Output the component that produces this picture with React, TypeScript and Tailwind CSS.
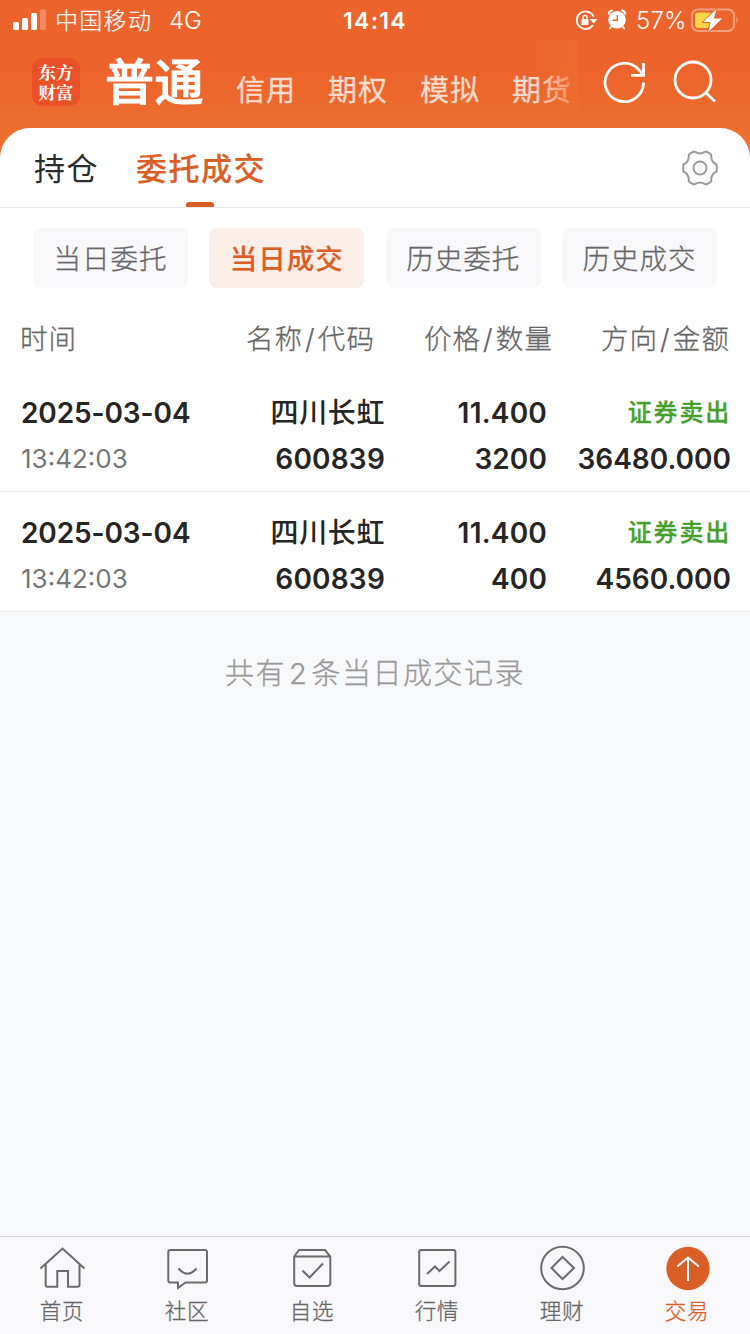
import React from "react"

type Trade = {
    id: number
    date: string
    time: string
    name: string
    code: string
    price: string
    amount: string
    side: string
    total: string
}

type NavItem = {
    label: string
    icon: React.ReactNode
    active?: boolean
}

const trades: Trade[] = [
    { id: 1, date: "2025-03-04", time: "13:42:03", name: "四川长虹", code: "600839", price: "11.400", amount: "3200", side: "证券卖出", total: "36480.000" },
    { id: 2, date: "2025-03-04", time: "13:42:03", name: "四川长虹", code: "600839", price: "11.400", amount: "400", side: "证券卖出", total: "4560.000" },
]

const filters = ["当日委托", "当日成交", "历史委托", "历史成交"]

const navItems: NavItem[] = [
    {
        label: "首页",
        icon: <path d="M2.5 23.5 24.5 3.5 46.5 23.5M7.7 19V40Q7.7 41.7 9.4 41.7H19.3V26H30V41.7H39.8Q41.5 41.7 41.5 40V19" />,
    },
    {
        label: "社区",
        icon: (
            <>
                <path d="M7.3 5H42Q44 5 44 7V35.5Q44 37.5 42 37.5H22.5L15 43V37.5H7.3Q5.3 37.5 5.3 35.5V7Q5.3 5 7.3 5Z" />
                <path d="M15.5 23.5Q24.5 34 33.5 23.5" />
            </>
        ),
    },
    {
        label: "自选",
        icon: (
            <>
                <path d="M6.2 11.5 11 5H37L42.3 11.5V38Q42.3 41 39.5 41H9Q6.2 41 6.2 38ZM6.2 11.5H42.3" />
                <path d="M14.5 25.5 21.5 32.5 35 18.5" />
            </>
        ),
    },
    {
        label: "行情",
        icon: (
            <>
                <rect x="6.2" y="5" width="36.2" height="36" rx="2" />
                <path d="M14 29 22 21.5 26.5 26 36.5 16.5" />
            </>
        ),
    },
    {
        label: "理财",
        icon: (
            <>
                <circle cx="24.5" cy="23" r="21.3" />
                <path d="M24.5 12 36 23 24.5 34 13.5 23Z" />
            </>
        ),
    },
    {
        label: "交易",
        active: true,
        icon: (
            <>
                <circle cx="25" cy="23.5" r="21.7" fill="#d95f27" stroke="none" />
                <path d="M25 36V13M14.3 21.5 25 12.5 35.8 21.5" stroke="#fff" />
            </>
        ),
    },
]

function StatusBar() {
    return (
        <div className="flex h-10 items-center text-white">
            <svg className="ml-3 h-6 w-9 shrink-0" viewBox="0 0 36 24" fill="#fff">
                <rect x="1" y="14" width="6" height="8" rx="1.5" />
                <rect x="10" y="10" width="6" height="12" rx="1.5" />
                <rect x="19" y="5" width="6" height="17" rx="1.5" />
                <rect x="28" y="1" width="6" height="21" rx="1.5" opacity=".25" />
            </svg>
            <span className="mt-0.5 ml-[7px] w-[114px] text-[23px] font-light tracking-[1.3px] [-webkit-text-stroke:0.2px]">中国移动</span>
            <span className="mt-0.5 w-[174px] text-[24px] font-light">4G</span>
            <span className="mt-0.5 w-[232px] text-[23px] font-semibold tracking-[1.3px]">14:14</span>
            <svg className="h-6 w-[22px] shrink-0" viewBox="0 0 22 24" fill="none" stroke="#fff" strokeWidth="1.8">
                <path d="M18 17A8.8 8.8 0 1 1 18.8 9" />
                <path d="M14.5 11H22.5L18.8 15.5Z" fill="#fff" stroke="none" />
                <rect x="6.5" y="11" width="7" height="6" rx=".8" fill="#fff" stroke="none" />
                <path d="M8 11.5V9.5a2 2 0 0 1 4 0V11.5" strokeWidth="1.3" />
            </svg>
            <svg className="-mt-0.5 ml-[9px] h-6 w-[22px] shrink-0" viewBox="0 0 22 24">
                <circle cx="11" cy="12.8" r="8.8" fill="#fff" />
                <path d="M2.8 6.7Q3.2 4 6 3.5M19.2 6.7Q18.8 4 16 3.5" fill="none" stroke="#fff" strokeWidth="2" strokeLinecap="round" />
                <path d="M5 20 3.8 21.5M17 20 18.2 21.5" stroke="#fff" strokeWidth="1.8" strokeLinecap="round" />
                <path d="M11.3 8V13.3H6.5" fill="none" stroke="#ec632b" strokeWidth="1.4" />
            </svg>
            <span className="mt-0.5 ml-[8px] w-[55px] text-[24px] font-light tracking-[0.2px]">57%</span>
            <svg className="h-7 w-12 shrink-0" viewBox="0 0 48 28">
                <rect x="1" y="3.5" width="42" height="21.5" rx="6" fill="none" stroke="#fff" strokeOpacity=".4" strokeWidth="2" />
                <path d="M45.5 11Q48 14 45.5 17.5Z" fill="#fff" opacity=".5" />
                <rect x="4" y="6.5" width="17" height="15.5" rx="3" fill="#f8d648" />
                <path d="M26.5 1.5 11 16.5H19L16.5 27.500 32 12H23.5Z" fill="#fff" stroke="#ec632b" strokeWidth="1" />
            </svg>
        </div>
    )
}

function TopBar() {
    return (
        <div className="flex h-[88px] text-white">
            <div className="mt-[18px] ml-8 flex h-12 w-12 items-center justify-center rounded-[10px] bg-[#eb5129] text-center font-['Noto_Serif_CJK_SC','Noto_Sans_CJK_SC',serif] text-[17.5px] leading-[20px] font-bold">
                东方<br />财富
            </div>
            <h1 className="mt-[8px] ml-[25px] w-[131px] text-[49px] leading-[70px] font-medium tracking-[0.5px] [-webkit-text-stroke:1px]">普通</h1>
            <div className="relative flex w-[342px] shrink-0 gap-[32px] overflow-hidden text-[29px] leading-[102px] tracking-[1px] whitespace-nowrap text-[#fcdccd] [-webkit-text-stroke:0.3px]">
                <span>信用</span>
                <span>期权</span>
                <span>模拟</span>
                <span>期货</span>
                <div className="absolute top-0 right-0 h-full w-[44px] bg-linear-to-r from-[#ee6d31]/0 to-[#ee6d31]/80" />
            </div>
            <svg className="mt-[20px] ml-[25px] h-11 w-11 shrink-0" viewBox="0 0 44 44" fill="none" stroke="#fff" strokeWidth="2.8">
                <path d="M40.500 22.5A19.2 19.2 0 1 1 35.5 9.5L40 14" />
                <path d="M40.5 3V15.3H28" />
            </svg>
            <svg className="mt-[20px] ml-[25px] h-11 w-11 shrink-0" viewBox="0 0 44 44" fill="none" stroke="#fff" strokeWidth="2.8">
                <circle cx="21" cy="20" r="18" />
                <path d="M33.5 32.5 43 41.5" />
            </svg>
        </div>
    )
}

function Tabs() {
    return (
        <div className="flex h-20 border-b border-[#ebebed] pr-8 pl-[34px] text-[31px] leading-[82px] tracking-[1.5px]">
            <span className="w-[102px] text-[#2b2b2b]">持仓</span>
            <div className="relative w-[132px] font-medium text-[#d95f27] [-webkit-text-stroke:0.2px]">
                委托成交
                <div className="absolute bottom-0 left-[50px] h-[5px] w-7 rounded-t-[3px] bg-[#d95f27]" />
            </div>
            <svg className="mt-[22px] ml-auto h-9 w-9" viewBox="0 0 36 36" fill="none" stroke="#999" strokeWidth="2">
                <path d="M12 1.5C14 2.5 15.5 3.5 18 3.5S22 2.5 24 1.5Q27 2.5 29.3 5C28.8 9 30.5 12.500 34.500 14.5Q35.3 18 34.5 21.5C30.5 23.500 28.8 27 29.3 31Q27 33.5 24 34.5C22 33.5 20.5 32.5 18 32.5S14 33.5 12 34.5Q9 33.500 6.700 31C7.200 27 5.500 23.500 1.500 21.5Q.7 18 1.5 14.5C5.5 12.5 7.2 9 6.7 5Q9 2.5 12 1.5Z" strokeLinejoin="round" />
                <circle cx="18" cy="18" r="6.5" />
            </svg>
        </div>
    )
}

function TradeRow({ trade }: { trade: Trade }) {
    return (
        <div className="grid h-[120px] grid-cols-[190px_174px_162px_184px] content-start border-b border-[#ebebed] bg-white pt-[17.5px] pl-[21px] text-right text-[28px] leading-[46px] font-semibold text-[#262626]">
            <span className="text-left tracking-[-0.1px]">{trade.date}</span>
            <span className="font-medium tracking-[0.6px]">{trade.name}</span>
            <span className="tracking-[0.2px]">{trade.price}</span>
            <span className="text-[24px] font-medium tracking-[1.8px] text-[#469f2c] [-webkit-text-stroke:0.3px]">{trade.side}</span>
            <span className="text-left text-[26px] font-normal text-[#777]">{trade.time}</span>
            <span className="tracking-[0.2px]">{trade.code}</span>
            <span className="tracking-[0.1px]">{trade.amount}</span>
            <span>{trade.total}</span>
        </div>
    )
}

function ColumnTitle({ first, second }: { first: string, second: string }) {
    return (
        <span>{first}<span className="mx-[2px]">/</span>{second}</span>
    )
}

function BottomNav() {
    return (
        <nav className="grid h-[98px] grid-cols-6 border-t border-[#d3d4d6] bg-[#f8f8fa]">
            {navItems.map((item) => (
                <div key={item.label} className={`flex flex-col items-center pt-2 text-[21.5px] leading-[36px] ${item.active ? "text-[#d95f27]" : "text-[#666]"}`}>
                    <svg className="h-[48px] w-[49px]" viewBox="0 0 49 48" fill="none" stroke="#6b6b6b" strokeWidth="2">
                        {item.icon}
                    </svg>
                    <span className="-ml-px font-light tracking-[0.8px] [-webkit-text-stroke:0.3px]">{item.label}</span>
                </div>
            ))}
        </nav>
    )
}

function App() {
    return (
        <div className="flex h-[1334px] w-[750px] flex-col overflow-hidden bg-[#f7f8fa] font-['Inter','Noto_Sans_CJK_SC',sans-serif]">
            <header className="h-[168px] shrink-0 bg-linear-to-b from-[#ec632b] from-40% to-[#ee7131] to-90%">
                <StatusBar />
                <TopBar />
            </header>
            <main className="-mt-10 flex-1">
                <div className="rounded-t-[30px] bg-white">
                    <Tabs />
                    <div className="flex h-[100px] justify-between pt-5 pr-[33px] pl-[33px]">
                        {filters.map((filter) => (
                            <div key={filter} className={`h-[60px] w-[155px] rounded-lg text-center text-[27.5px] leading-[62px] tracking-[1px] ${filter === "当日成交" ? "bg-[#fbeee7] font-medium text-[#d95f27] [-webkit-text-stroke:0.2px]" : "bg-[#f8f8fa] font-light text-[#666] [-webkit-text-stroke:0.3px]"}`}>
                                {filter}
                            </div>
                        ))}
                    </div>
                    <div className="grid h-16 grid-cols-[175px_180px_178px_177px] pl-5 text-right text-[27.5px] leading-[62px] font-light tracking-[1.1px] text-[#666] [-webkit-text-stroke:0.3px]">
                        <span className="text-left">时间</span>
                        <ColumnTitle first="名称" second="代码" />
                        <ColumnTitle first="价格" second="数量" />
                        <ColumnTitle first="方向" second="金额" />
                    </div>
                </div>
                {trades.map((trade) => (
                    <TradeRow key={trade.id} trade={trade} />
                ))}
                <p className="pt-[31px] text-center text-[29px] leading-[62px] font-light tracking-[1.5px] text-[#999] [-webkit-text-stroke:0.3px]">
                    共有<span className="mx-[3px]">2</span>条当日成交记录
                </p>
            </main>
            <BottomNav />
        </div>
    )
}

export default App
